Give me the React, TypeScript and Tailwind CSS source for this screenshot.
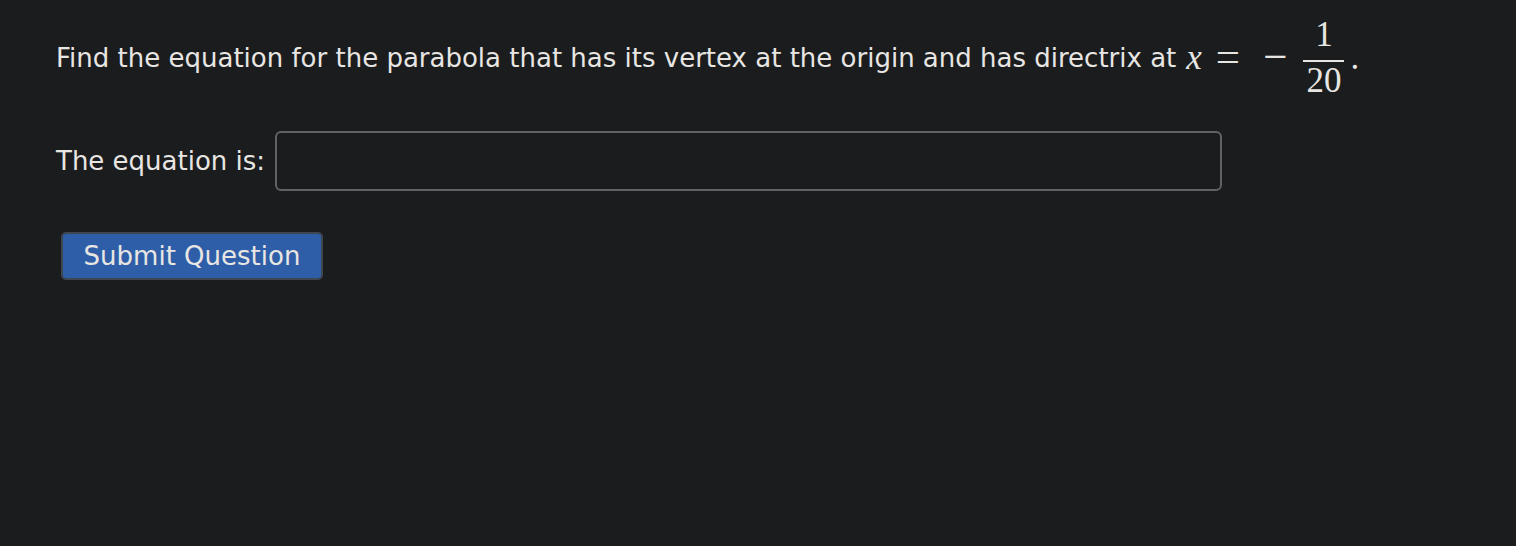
const sans = { fontFamily: '"DejaVu Sans", sans-serif' };
const serif = { fontFamily: '"Liberation Serif", "DejaVu Serif", serif' };

function Fraction({ top, bottom }: { top: string; bottom: string }) {
  return (
    <span className="inline-flex flex-col items-center w-[41px] ml-[16px]" style={serif}>
      <span className="text-[35px] leading-[36px] pb-[7px]">{top}</span>
      <span className="block h-[2px] w-full bg-[#e8e6e3]" />
      <span className="text-[35px] leading-[36px] mt-[1px]">{bottom}</span>
    </span>
  );
}

export default function App() {
  return (
    <div className="min-h-[546px] bg-[#1b1c1e] text-[#e8e6e3] pl-[56px] pt-[18px]" style={sans}>
      <div className="flex items-center h-[80px] text-[26px] whitespace-nowrap">
        <span>Find the equation for the parabola that has its vertex at the origin and has directrix at</span>
        <span className="flex items-center ml-[10px] text-[35px]" style={serif}>
          <span className="italic">x</span>
          <span className="ml-[14px] mb-[4px] text-[43px] leading-none">=</span>
          <span className="ml-[23px] mb-[4px] text-[43px] leading-none">−</span>
          <Fraction top="1" bottom="20" />
          <span className="ml-[6px]">.</span>
        </span>
      </div>

      <div className="mt-[33px] flex items-center gap-[10px]">
        <label htmlFor="answer" className="text-[26px] whitespace-nowrap">The equation is:</label>
        <input
          id="answer"
          type="text"
          className="w-[947px] h-[60px] rounded-[6px] border-2 border-[#5f6368] bg-[#1b1c1e] px-3 text-[26px] text-[#e8e6e3] outline-none"
        />
      </div>

      <button
        type="button"
        className="mt-[41px] ml-[5px] w-[262px] h-[48px] rounded-[5px] border-2 border-[#3e4651] bg-[#2f5ea8] text-[26px] text-[#e8e6e3]"
      >
        Submit Question
      </button>
    </div>
  );
}
